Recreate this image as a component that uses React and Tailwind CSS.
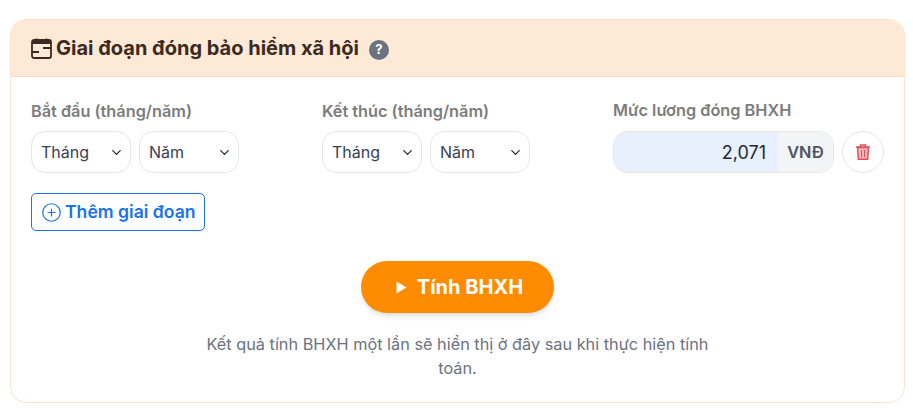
import React from 'react';
import { ChevronDown, CirclePlus } from 'lucide-react';

const FONT = "font-['Inter',sans-serif]";

function SelectBox({ label }) {
  return (
    <div className="flex h-[42px] w-[100px] items-center justify-between rounded-[14px] border border-[#e5e7eb] bg-white pl-[9px] pr-[6px] text-base text-[#374151]">
      <span>{label}</span>
      <ChevronDown size={15} strokeWidth={2} className="text-[#1f2937]" />
    </div>
  );
}

function PeriodField({ title }) {
  return (
    <div>
      <label className="mb-[9px] block text-[16.3px] leading-[22px] font-semibold text-[#7c7c7c]">{title}</label>
      <div className="flex gap-2">
        <SelectBox label="Tháng" />
        <SelectBox label="Năm" />
      </div>
    </div>
  );
}

export default function App() {
  return (
    <div className={`${FONT} min-h-[416px] bg-white pl-[10px] pr-[8px] pt-[19px]`}>
      <div className="h-[384px] overflow-hidden rounded-[16px] border border-[#fde3cf] bg-white">
        {/* Header */}
        <div className="flex h-[57px] items-center border-b border-[#fdd9bd] bg-[#fee8d6] pl-5">
          <svg width="21" height="21" viewBox="0 0 21 21" className="mr-[4px]" fill="none">
            <rect x="1" y="2" width="19" height="18" rx="2" stroke="#3b2a1e" strokeWidth="1.8" />
            <path d="M1 4a2 2 0 0 1 2-2h15a2 2 0 0 1 2 2v2H1z" fill="#3b2a1e" />
            <path d="M5.5 0.5v3M15.5 0.5v3" stroke="#3b2a1e" strokeWidth="1.6" />
            <path d="M12 10h8M1 14h7" stroke="#3b2a1e" strokeWidth="1.8" />
          </svg>
          <h2 className="text-[20px] font-bold text-[#3b2a1e]">Giai đoạn đóng bảo hiểm xã hội</h2>
          <span className="ml-[10px] mt-[3px] flex h-5 w-5 items-center justify-center rounded-full bg-[#6b7280] text-[13px] font-bold text-white">?</span>
        </div>

        {/* Body */}
        <div className="px-5 pt-[23px]">
          <div className="grid grid-cols-3 gap-5">
            <PeriodField title="Bắt đầu (tháng/năm)" />
            <PeriodField title="Kết thúc (tháng/năm)" />
            <div className="-mt-[1px]">
              <label className="mb-[10px] block text-[16.3px] leading-[22px] font-semibold text-[#7c7c7c]">Mức lương đóng BHXH</label>
              <div className="flex gap-2">
                <div className="flex h-[42px] w-[221px] overflow-hidden rounded-[14px] border border-[#e5e7eb]">
                  <div className="flex flex-1 items-center justify-end bg-[#e8f0fe] pr-[12px] text-[18px] text-[#1f2937]">2,071</div>
                  <div className="flex w-[55px] items-center justify-center bg-[#f3f4f6] text-[16.3px] font-semibold text-[#4b5563]">VNĐ</div>
                </div>
                <button className="flex h-[42px] w-[42px] items-center justify-center rounded-full border border-[#e5e7eb] bg-white">
                  <svg width="14" height="16" viewBox="0 0 14 16" fill="none">
                    <path d="M0 3h14M4.5 3V1h5v2" stroke="#d9545f" strokeWidth="1.6" />
                    <path d="M1.5 3.5h11l-.8 11.7H2.3z" fill="#f3b5ba" stroke="#d9545f" strokeWidth="1.5" />
                    <path d="M5.5 6v7M8.5 6v7" stroke="#d9545f" strokeWidth="1" />
                  </svg>
                </button>
              </div>
            </div>
          </div>

          <button className="mt-5 flex h-[38px] w-[174px] items-center gap-[3px] rounded-[5px] border border-[#1a73e8] pl-[9px] text-[17.6px] font-semibold text-[#1a73e8]">
            <CirclePlus size={21} strokeWidth={1.4} />
            Thêm giai đoạn
          </button>

          <div className="mt-[30px] flex flex-col items-center">
            <button className="flex h-[52px] w-[193px] items-center justify-center gap-[10px] rounded-full bg-[#ff8c00] pl-[4px] text-[20px] font-bold text-white shadow-md">
              <svg width="11" height="13" viewBox="0 0 11 13"><path d="M0.5 0.5L10.5 6.5L0.5 12.5z" fill="#fff" /></svg>
              Tính BHXH
            </button>
            <p className="mt-[19px] w-[510px] text-center text-[16.3px] leading-6 text-[#6b7280]">
              Kết quả tính BHXH một lần sẽ hiển thị ở đây sau khi thực hiện tính toán.
            </p>
          </div>
        </div>
      </div>
    </div>
  );
}
